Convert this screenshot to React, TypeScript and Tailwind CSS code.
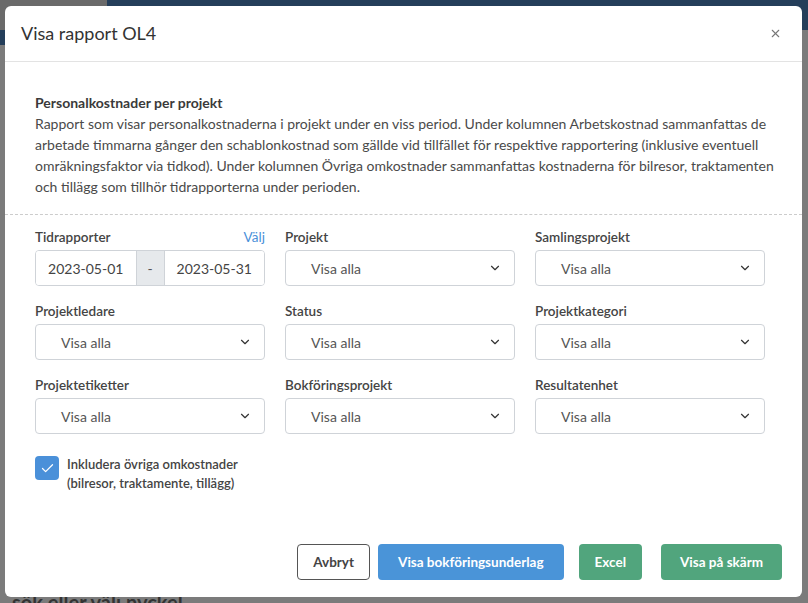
import { ChevronDown, Check, X } from "lucide-react";

const font = { fontFamily: "Lato, 'Open Sans', sans-serif" };

type Field = { label: string; link?: string; range?: boolean };

const fields: Field[] = [
  { label: "Tidrapporter", link: "Välj", range: true },
  { label: "Projekt" },
  { label: "Samlingsprojekt" },
  { label: "Projektledare" },
  { label: "Status" },
  { label: "Projektkategori" },
  { label: "Projektetiketter" },
  { label: "Bokföringsprojekt" },
  { label: "Resultatenhet" },
];

const SelectBox = () => (
  <div className="flex h-9 items-center justify-between rounded border border-[#cfd3d8] bg-white pl-[25px] pr-3 text-[14px] text-[#555]">
    <span>Visa alla</span>
    <ChevronDown className="h-[14px] w-[14px] text-[#333]" strokeWidth={2} />
  </div>
);

const DateRange = () => (
  <div className="flex h-9 overflow-hidden rounded border border-[#cfd3d8] text-[14px] text-[#444]">
    <div className="flex flex-1 items-center justify-center bg-white">2023-05-01</div>
    <div className="flex w-[29px] items-center justify-center border-x border-[#cfd3d8] bg-[#e6e9ec] text-[#555]">-</div>
    <div className="flex flex-1 items-center justify-center bg-white">2023-05-31</div>
  </div>
);

export default function App() {
  return (
    <div className="relative h-[603px] w-[808px] overflow-hidden bg-[#7b7b7b]" style={font}>
      {/* dimmed page behind */}
      <div className="flex h-[30px]">
        <div className="w-[107px] bg-[#6a6a6a]" />
        <div className="flex-1 bg-[#243e5a]" />
      </div>
      <div className="h-[15px] w-[6px] bg-[#243e5a]" />
      <div className="absolute bottom-[-14px] left-[12px] text-[20px] font-bold text-[#333]">sök eller välj nyckel</div>

      {/* modal */}
      <div className="absolute left-[5px] top-[6px] flex h-[591px] w-[797px] flex-col rounded-md bg-white">
        <header className="flex h-[56px] items-center justify-between border-b border-[#e3e3e3] pl-4 pr-5">
          <h2 className="text-[18px] font-normal text-[#333]">Visa rapport OL4</h2>
          <X className="h-[13px] w-[13px] text-[#777]" strokeWidth={2} />
        </header>

        <section className="border-b border-dashed border-[#cccccc] pb-[17px] pl-[30px] pr-[20px] pt-[30px] text-[14px] leading-[21px] text-[#4a4a4a]">
          <div className="font-bold text-[#3a3a3a]">Personalkostnader per projekt</div>
          <p className="whitespace-nowrap">
            Rapport som visar personalkostnaderna i projekt under en viss period. Under kolumnen Arbetskostnad sammanfattas de
            <br />
            arbetade timmarna gånger den schablonkostnad som gällde vid tillfället för respektive rapportering (inklusive eventuell
            <br />
            omräkningsfaktor via tidkod). Under kolumnen Övriga omkostnader sammanfattas kostnaderna för bilresor, traktamenten
            <br />
            och tillägg som tillhör tidrapporterna under perioden.
          </p>
        </section>

        <div className="grid grid-cols-[230px_230px_230px] gap-x-5 gap-y-[18px] pl-[30px] pt-[15px]">
          {fields.map((f) => (
            <div key={f.label} className="flex flex-col gap-[5px]">
              <div className="flex items-center justify-between text-[13.5px] leading-[15px] font-semibold text-[#444]">
                <span>{f.label}</span>
                {f.link && <span className="font-normal text-[#4a90d9]">{f.link}</span>}
              </div>
              {f.range ? <DateRange /> : <SelectBox />}
            </div>
          ))}
        </div>

        <label className="ml-[30px] mt-[21px] flex items-start gap-2">
          <span className="mt-[1px] flex h-6 w-6 items-center justify-center rounded bg-[#4a90d9]">
            <Check className="h-[15px] w-[15px] text-white" strokeWidth={2} />
          </span>
          <span className="text-[13px] leading-[19px] font-semibold text-[#444]">
            Inkludera övriga omkostnader
            <br />
            (bilresor, traktamente, tillägg)
          </span>
        </label>

        <footer className="mt-auto mb-[17px] flex justify-end pr-5">
          <button className="mr-2 h-9 rounded border border-[#555] bg-white px-[15px] text-[13.5px] font-bold text-[#444]">Avbryt</button>
          <button className="mr-[15px] h-9 rounded bg-[#4a94d8] px-[20px] text-[13.5px] font-bold text-white">Visa bokföringsunderlag</button>
          <button className="mr-[19px] h-9 rounded bg-[#51a57d] px-[16px] text-[13.5px] font-bold text-white">Excel</button>
          <button className="h-9 rounded bg-[#51a57d] px-[19px] text-[13.5px] font-bold text-white">Visa på skärm</button>
        </footer>
      </div>
    </div>
  );
}
